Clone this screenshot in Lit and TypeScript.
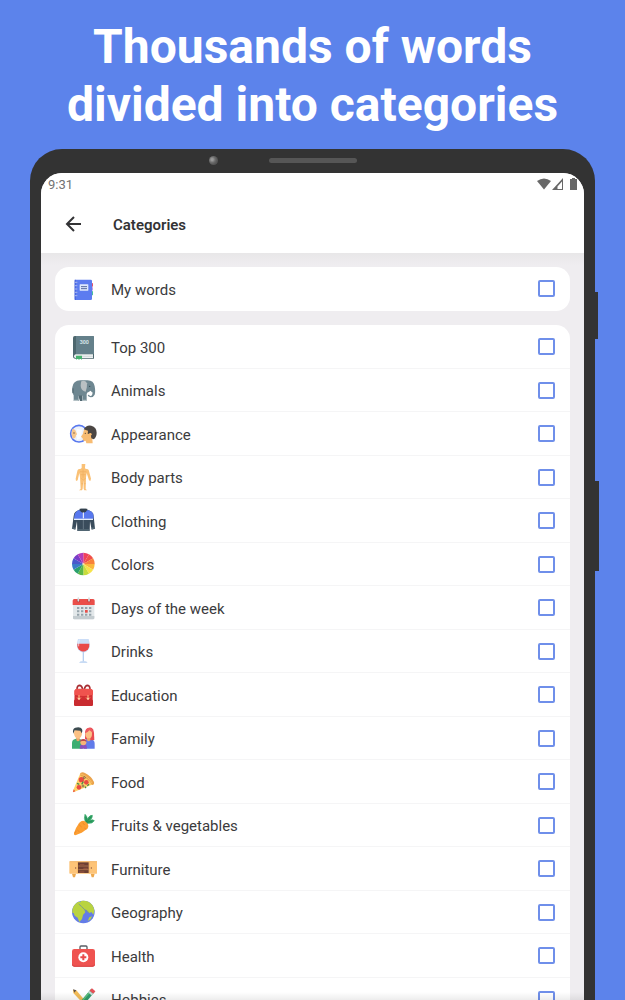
import { LitElement, html, svg, css, type SVGTemplateResult } from "lit";
import { customElement, property } from "lit/decorators.js";

interface Category {
  name: string;
  box: string;
  art: SVGTemplateResult;
}

const wedge = (i: number): string => {
  const a = ((i * 30 - 90) * Math.PI) / 180;
  const b = (((i + 1) * 30 - 90) * Math.PI) / 180;
  const p = (t: number) => `${(70 + 34 * Math.cos(t)).toFixed(1)} ${(57 + 34 * Math.sin(t)).toFixed(1)}`;
  return `M70 57L${p(a)}A34 34 0 0 1 ${p(b)}Z`;
};

const wheel = [
  "#f0405c", "#f0504a", "#f8823a", "#fbb83c", "#f6e34a", "#c8dc3c",
  "#5cb848", "#2ba06c", "#3c7cc8", "#4a58cc", "#7a3cc8", "#b43cb8",
];

const own: Category = {
  name: "My words",
  box: "87 45 84 84",
  art: svg`
    <rect x="150" y="66" width="9" height="11" rx="2" fill="#e0506e"/>
    <rect x="150" y="78" width="8" height="11" rx="2" fill="#a06adc"/>
    <rect x="150" y="90" width="9" height="13" rx="2" fill="#48c09a"/>
    <rect x="104" y="56" width="52" height="61" rx="4" fill="#5c7cf0"/>
    <path d="M106 56v61" stroke="#4a66dc" stroke-width="4"/>
    <path d="M103 64h9M103 74h9M103 84h9M103 94h9M103 104h9" stroke="#a9b6ea" stroke-width="3"/>
    <rect x="119" y="70" width="26" height="19" rx="1" fill="#dfeafc"/>
    <path d="M123 77h18M123 83h18" stroke="#56699e" stroke-width="3"/>`,
};

const categories: Category[] = [
  {
    name: "Top 300",
    box: "87 219 84 84",
    art: svg`
      <path d="M104 225h54a4 4 0 0 1 4 4v64h-56q-7 0-7-8v-54q0-6 5-6z" fill="#4d676e"/>
      <path d="M108 225h50a4 4 0 0 1 4 4v50h-54z" fill="#64808a"/>
      <path d="M107 280h52v11h-52q-5 0-5-5t5-6z" fill="#eef2f2"/>
      <path d="M107 286h52" stroke="#c5cfd1" stroke-width="2"/>
      <path d="M108 284h18v12l-5-3-4 3-4-3-5 3z" fill="#45b36e"/>
      <text x="133" y="250" text-anchor="middle" font-family="Roboto, sans-serif" font-weight="700" font-size="16" fill="#d3e5e8">300</text>`,
  },
  {
    name: "Animals",
    box: "27 21 84 84",
    art: svg`
      <path d="M37 52q2-20 24-21h18q22-2 25 18 3 17 0 25-4 8-12 8-8-1-9-7l4-1q2 5 6 4 5-2 4-10l-5-6-10 6-2 4v21H67V77H56v16H41V76q-6-8-4-24z" fill="#6e8791"/>
      <path d="M56 76h10v17h-6q-4-8-4-17z" fill="#516872"/>
      <path d="M64 34q13-5 17 6 1 12-4 25-14-3-15-17 0-8 2-14z" fill="#b9c0c3"/>
      <path d="M82 66q4 9 11 5l4-5q1 9-5 9-8 0-10-9z" fill="#fff"/>
      <circle cx="89" cy="49" r="2" fill="#314850"/>
      <path d="M39 55v14" stroke="#4d626b" stroke-width="3"/>
      <path d="M42 91h12M68 91h12" stroke="#c3cdd1" stroke-width="3"/>`,
  },
  {
    name: "Appearance",
    box: "27 151 84 84",
    art: svg`
      <circle cx="57" cy="189" r="25" fill="#edf2fb" stroke="#5878ee" stroke-width="5"/>
      <path d="M37 174q11 2 11 10l5 7-5 3q0 10-10 10-6-15-1-30z" fill="#f6c68c"/>
      <path d="M50 174l16 4-3 25-12 5z" fill="#fafcff"/>
      <circle cx="42" cy="187" r="2" fill="#66503d"/>
      <path d="M71 180q8-14 24-8 15 7 10 23l-8 9 1 14H79l-2-8q-10 3-9-7l-5-5 6-9z" fill="#f8bc72"/>
      <path d="M71 176q8-14 23-11 16 4 16 21 0 13-9 20l-7-3-2-13-9-1 1-9z" fill="#4b4643"/>
      <circle cx="76" cy="188" r="2" fill="#66503d"/>
      <circle cx="91" cy="191" r="4" fill="#f8bc72"/>`,
  },
  {
    name: "Body parts",
    box: "27 20 84 84",
    art: svg`
      <path d="M65 20q6-4 11 0l-1 11 1 3q10 0 11 7l6 23-2 7-4-2-7-22-2 13-1 35 4 4h-8l-2-5-1-27-2 27-2 5h-9l5-4-2-35-2-13-5 22-5 2-1-7 5-23q1-7 11-7l2-3z" fill="#fac176"/>
      <path d="M69 36v25M60 43h19M62 52h15M63 63l7 5 7-5M64 79h5M72 79h5" fill="none" stroke="#efb062" stroke-width="2"/>`,
  },
  {
    name: "Clothing",
    box: "27 150 84 84",
    art: svg`
      <path d="M56 156l7-4h14l8 4 10 5q6 4 6 14l4 37-10 3-5-25-1 29H52l-1-29-5 25-10-3 5-38q1-10 6-13z" fill="#3a4c5c"/>
      <path d="M55 156l15 5 15-5 10 5q5 4 6 13l-1 10H42l1-10q1-9 6-13z" fill="#5878ee"/>
      <path d="M42 184h57" stroke="#e5edf9" stroke-width="4"/>
      <path d="M59 152h23l-4 9-8 4-8-4z" fill="#33404d"/>
      <path d="M70 186v28" stroke="#7c8c98" stroke-width="2"/>
      <path d="M70 163v18" stroke="#fff" stroke-width="3"/>
      <path d="M36 209l10 3M95 212l10-3M53 216h35" stroke="#596d7a" stroke-width="4"/>`,
  },
  {
    name: "Colors",
    box: "27 18 84 84",
    art: svg`${wheel.map((c, i) => svg`<path d=${wedge(i)} fill=${c}/>`)}
      <circle cx="70" cy="57" r="3" fill="#f5e2ae"/>`,
  },
  {
    name: "Days of the week",
    box: "27 148 84 84",
    art: svg`
      <rect x="39" y="161" width="64" height="60" rx="4" fill="#e3e8ea"/>
      <path d="M39 211h64v7q0 3-4 3H43q-4 0-4-3z" fill="#c4ccd0"/>
      <path d="M38 178v-13q0-5 5-5h56q5 0 5 5v13z" fill="#ea4f4a"/>
      <circle cx="55" cy="165" r="5" fill="#bd3d3d"/><circle cx="87" cy="165" r="5" fill="#bd3d3d"/>
      <path d="M55 157v8M87 157v8" stroke="#d7dee0" stroke-width="5" stroke-linecap="round"/>
      <path d="M51 187h43M51 197h43M51 207h43" stroke="#95a2aa" stroke-width="6" stroke-dasharray="7 5"/>
      <rect x="75" y="193" width="8" height="8" fill="#e94f4a"/>`,
  },
  {
    name: "Drinks",
    box: "27 18 84 84",
    art: svg`
      <path d="M54 21h32q6 20 1 29-6 11-17 11T53 50q-5-9 1-29z" fill="#cbddf7"/>
      <path d="M52 35h36q1 11-4 17-6 7-14 7t-14-7q-5-6-4-17z" fill="#e94949"/>
      <path d="M70 59v29" stroke="#b6cff0" stroke-width="4"/>
      <path d="M57 92q2-4 13-4t13 4z" fill="#b6cff0"/>
      <path d="M58 23q-3 9-2 20" fill="none" stroke="#f2f7ff" stroke-width="2"/>`,
  },
  {
    name: "Education",
    box: "27 148 84 84",
    art: svg`
      <path d="M51 171q0-12 7-13 8 0 10 13M73 171q2-13 10-13 7 1 7 13" fill="none" stroke="#a62e33" stroke-width="5"/>
      <path d="M44 174q2-5 8-5h38q6 0 8 5v40q0 6-6 6H49q-6 0-6-6z" fill="#d22f32"/>
      <path d="M43 174q1-6 9-6h38q8 0 9 6v12q-28 8-56 0z" fill="#f0534e"/>
      <rect x="42" y="201" width="57" height="19" rx="4" fill="#c92b30"/>
      <path d="M57 187v12M84 187v12" stroke="#f78e67" stroke-width="5"/>
      <path d="M51 194q6 12 12 0M78 194q6 12 12 0" fill="none" stroke="#f08a6c" stroke-width="3"/>
      <circle cx="57" cy="198" r="3" fill="#ffd5ab"/><circle cx="84" cy="198" r="3" fill="#ffd5ab"/>`,
  },
  {
    name: "Family",
    box: "27 18 84 84",
    art: svg`
      <path d="M36 89V72q0-10 10-12l5-2 8 2q9 2 9 13v16z" fill="#3dae72"/>
      <path d="M72 89V73q1-12 9-13h10q13 2 13 14v15z" fill="#617bea"/>
      <path d="M75 60q0-24 5-30 6-6 14-4 7 3 8 16l1 21-10 1z" fill="#e94b50"/>
      <path d="M49 55h10v9q-5 6-10 0zM81 55h10v9q-5 6-10 0z" fill="#eba569"/>
      <ellipse cx="54" cy="43" rx="12" ry="16" fill="#fbc184"/>
      <path d="M40 44q-4-15 6-18 15-4 20 4 3 6-1 13l-4-8-17-1z" fill="#3c4b50"/>
      <ellipse cx="86" cy="44" rx="10" ry="14" fill="#fbc184"/>
      <path d="M75 43q0-16 12-17 12 1 12 15l-11-7q-5 8-13 9z" fill="#ee5960"/>
      <path d="M59 89q0-15 11-15t11 15z" fill="#8b50bd"/>
      <circle cx="70" cy="70" r="9" fill="#f9b477"/>
      <path d="M61 69q-1-9 9-9t9 9l-4-3H65z" fill="#ba4950"/>`,
  },
  {
    name: "Food",
    box: "27 148 84 84",
    art: svg`
      <path d="M61 161l38 33-57 23q-5 1-3-4z" fill="#ffd268"/>
      <path d="M61 160q7-5 14 0 19 9 27 27 2 9-6 9Q82 173 61 169z" fill="#eba44d"/>
      <path d="M62 163q23 7 34 27" fill="none" stroke="#f8bd62" stroke-width="3"/>
      <circle cx="64" cy="180" r="8" fill="#e94b42"/><circle cx="79" cy="188" r="7" fill="#e94b42"/>
      <circle cx="57" cy="203" r="7" fill="#e94b42"/><path d="M41 209l5 6-7 3z" fill="#ea5845"/>
      <circle cx="69" cy="199" r="3" fill="none" stroke="#554d48" stroke-width="2"/>
      <circle cx="73" cy="174" r="3" fill="none" stroke="#554d48" stroke-width="2"/>
      <path d="M51 191l7 3M70 186l-5 8M82 198l5-4M75 201l3 4" stroke="#4c8b48" stroke-width="4"/>`,
  },
  {
    name: "Fruits & vegetables",
    box: "27 18 84 84",
    art: svg`
      <path d="M76 48q-5-10-1-23 6 5 7 13 9-12 15-10 1 9-8 15 9-4 14 1-6 9-17 8l-8 2z" fill="#32a565" stroke="#32a565" stroke-width="2"/>
      <path d="M79 49l14-17M79 48l-1-15M80 49l17-4" stroke="#217d50" stroke-width="2"/>
      <path d="M58 50q9-10 19-3 12 9 6 20-6 6-18 13l-17 7q-8 2-6-6 4-15 16-31z" fill="#fc9e32"/>
      <path d="M56 55l9 8M68 50l6 7M52 72l7 6M73 66l6 4M44 82l5-8" stroke="#f08c28" stroke-width="3"/>`,
  },
  {
    name: "Furniture",
    box: "27 148 84 84",
    art: svg`
      <path d="M36 201h12l-3 11h-6zM92 201h12l-3 11h-6z" fill="#eda84d"/>
      <rect x="28" y="164" width="84" height="37" rx="2" fill="#fdc478"/>
      <path d="M29 165h82M53 166v34M88 166v34" stroke="#efb062" stroke-width="2"/>
      <rect x="54" y="167" width="32" height="32" fill="#6c3f32"/>
      <path d="M55 178h31M55 189h31" stroke="#c98a5c" stroke-width="2"/>
      <path d="M60 174h13M70 185h13M58 196h15" stroke="#8d503c" stroke-width="4"/>
      <circle cx="47" cy="184" r="2" fill="#8b5540"/><circle cx="94" cy="184" r="2" fill="#8b5540"/>`,
  },
  {
    name: "Geography",
    box: "27 18 84 84",
    art: svg`
      <circle cx="70" cy="57" r="34" fill="#637ce7"/>
      <path d="M37 50q4-17 18-24l12 2 4 8 8 4 2 6-8 4 3 8-7 8-3 12-8 9-5-13-9-6-3-8-4 0z" fill="#b9d340"/>
      <path d="M62 24q22-4 35 12 5 8 6 18l-3 11-6-8-6 4-8-10-9-2-4-8 2-4-6-6z" fill="#b9d340"/>
      <path d="M88 73l8-3-4 9-9 5z" fill="#b9d340"/>
      <path d="M56 33q10 8 16 15t16 11" fill="none" stroke="#7f9d8c" stroke-width="3"/>`,
  },
  {
    name: "Health",
    box: "27 148 84 84",
    art: svg`
      <path d="M60 169v-9q0-3 3-3h15q3 0 3 3v9" fill="none" stroke="#585e64" stroke-width="4"/>
      <rect x="36" y="166" width="69" height="53" rx="7" fill="#ef5350"/>
      <path d="M36 211q3 5 9 5h51q6 0 9-5 0 8-8 8H44q-8 0-8-8z" fill="#d74444"/>
      <circle cx="70" cy="191" r="15" fill="#fff"/>
      <path d="M70 182v18M61 191h18" stroke="#e94b4b" stroke-width="6"/>`,
  },
  {
    name: "Hobbies",
    box: "27 279 84 84",
    art: svg`
      <path d="M39 290l10 2 27 32-8 6-28-30z" fill="#f4bd58"/>
      <path d="M39 289l10 3-6 7z" fill="#5c514b"/>
      <path d="M99 292l-44 52" stroke="#329c6d" stroke-width="14"/>
      <path d="M96 289l-44 52" stroke="#62c47b" stroke-width="4"/>
      <path d="M101 290l-7 8" stroke="#e65058" stroke-width="14"/>
      <path d="M94 298l-4 5" stroke="#c9dad7" stroke-width="14"/>`,
  },
];

@customElement("category-row")
export class CategoryRow extends LitElement {
  @property({ attribute: false }) item!: Category;

  static styles = css`
    :host { display: block; height: 100%; }
    .row { display: flex; align-items: center; height: 100%; padding: 0 15px 0 14px; cursor: pointer; }
    .icon { width: 28px; height: 28px; flex: none; margin-top: 2px; overflow: hidden; }
    .name { flex: 1; margin-left: 14px; padding-top: 2px; font-size: 15px; line-height: 20px; color: #3b3b3d; }
    .tick {
      appearance: none; flex: none; box-sizing: border-box; width: 17px; height: 17px; margin: 0;
      border: 2px solid #6f8fea; border-radius: 2px; background: #fff; cursor: pointer;
    }
    .tick:checked { background: #6f8fea; box-shadow: inset 0 0 0 2px #fff; }
  `;

  render() {
    return html`<label class="row">
      <svg class="icon" viewBox=${this.item.box} aria-hidden="true">${this.item.art}</svg>
      <span class="name">${this.item.name}</span>
      <input class="tick" type="checkbox" />
    </label>`;
  }
}

@customElement("app-root")
export class AppRoot extends LitElement {
  static styles = css`
    :host {
      display: flex; flex-direction: column; box-sizing: border-box; height: 100vh; overflow: hidden;
      background: #5c83eb; font-family: Roboto, "Liberation Sans", sans-serif;
    }
    .headline {
      margin: 0; padding: 18px 0 14px; text-align: center; color: #fff;
      font-size: 48px; line-height: 58px; font-weight: 700;
    }
    .line { display: block; }
    .phone {
      position: relative; flex: 1; min-height: 0; display: flex; flex-direction: column;
      margin: 1px 30px 0; padding: 0 11px; background: #333333; border-radius: 32px 32px 0 0;
    }
    .bezel { position: relative; height: 23px; padding-bottom: 1px; flex: none; display: flex; justify-content: center; align-items: center; }
    .speaker { width: 88px; height: 5px; border-radius: 3px; background: #565656; }
    .lens {
      position: absolute; left: 168px; top: 7px; width: 9px; height: 9px; border-radius: 50%;
      background: radial-gradient(circle at 35% 40%, #999999 0 1px, #6c6c6c 3px, #555555 5px);
    }
    .side { position: absolute; left: 100%; background: #333333; }
    .power { top: 143px; width: 3px; height: 47px; }
    .volume { top: 332px; width: 4px; height: 90px; }
    .screen {
      position: relative; flex: 1; min-height: 0; overflow: hidden; display: flex; flex-direction: column;
      border-radius: 21px 21px 0 0; background: #efedf0;
    }
    .screen::after {
      content: ""; position: absolute; inset: auto 0 0; height: 8px; pointer-events: none;
      background: linear-gradient(transparent, rgba(0, 0, 0, 0.07));
    }
    .status {
      display: flex; align-items: center; justify-content: space-between; flex: none; height: 22px;
      padding: 0 6px 0 7px; background: #fff; color: #727272; font-size: 13px;
    }
    .signals { width: 42px; height: 14px; }
    .bar { display: flex; align-items: center; flex: none; height: 58px; padding: 0 22px; gap: 28px; background: #fff; }
    .back { display: flex; padding: 0; border: 0; background: none; cursor: pointer; }
    .arrow { width: 22px; height: 22px; }
    .title { margin: 0; padding-top: 1px; font-size: 15px; line-height: 20px; font-weight: 600; color: #333335; }
    .content {
      flex: 1; min-height: 0; overflow: hidden; padding: 14px 14px 0;
      background: linear-gradient(#e8e7e8, #efedf0 12px);
    }
    .card { margin: 0 0 14px; padding: 0; list-style: none; background: #fff; border-radius: 14px; }
    .entry { box-sizing: border-box; height: 43px; border-bottom: 1px solid #f5f5f6; }
    .entry:nth-child(odd) { height: 44px; }
    .entry:last-child { border-bottom-color: transparent; }
  `;

  private entry = (item: Category) => html`<li class="entry"><category-row .item=${item}></category-row></li>`;

  render() {
    return html`
      <h1 class="headline"><span class="line">Thousands of words</span><span class="line">divided into categories</span></h1>
      <div class="phone">
        <span class="side power"></span>
        <span class="side volume"></span>
        <div class="bezel"><span class="lens"></span><span class="speaker"></span></div>
        <main class="screen">
          <div class="status">
            <span>9:31</span>
            <svg class="signals" viewBox="0 0 42 14" fill="#686868" aria-hidden="true">
              <path d="M1 4Q8-1 15 4L8 12.500Z"/>
              <path d="M27 1v12H16zM26 4.500l-4.500 5V12H26z" fill-rule="evenodd"/>
              <path d="M34 2h2V1h3v1h2v11h-7z"/>
            </svg>
          </div>
          <header class="bar">
            <button class="back" aria-label="Back">
              <svg class="arrow" viewBox="0 0 22 22" fill="none" stroke="#333335" stroke-width="2">
                <path d="M18 11H5M11 4l-7 7 7 7"/>
              </svg>
            </button>
            <h2 class="title">Categories</h2>
          </header>
          <div class="content">
            <ul class="card">${this.entry(own)}</ul>
            <ul class="card">${categories.map(this.entry)}</ul>
          </div>
        </main>
      </div>`;
  }
}
